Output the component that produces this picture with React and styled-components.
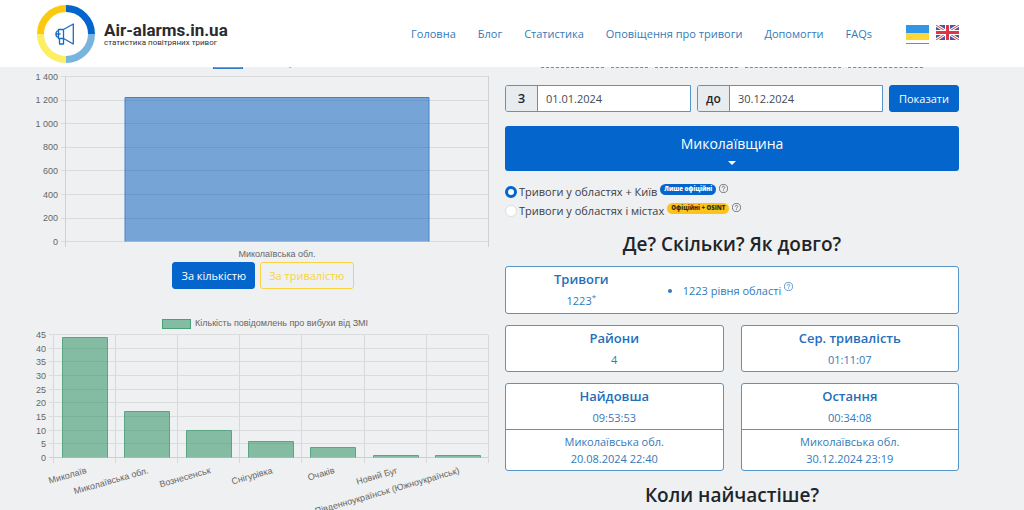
import React from "react";
import styled, { createGlobalStyle } from "styled-components";

const BLUE = "#0466cc";
const LINE = "#5795c8";
const TEXT_BLUE = "#3479b8";
const YELLOW = "#fbd341";

const Global = createGlobalStyle`
  *, *::before, *::after { box-sizing: border-box; }
  body {
    margin: 0;
    background: #eef0f2;
    color: #212529;
    font: 11px/18px "Open Sans", "Noto Sans", sans-serif;
  }
  button, input { font: inherit; }
  h1, h2, h3, p, ul { margin: 0; padding: 0; }
`;

const Page = styled.div`
  height: 100vh;
  overflow: hidden;
`;

const Header = styled.header`
  position: sticky;
  top: 0;
  z-index: 2;
  display: flex;
  align-items: center;
  justify-content: space-between;
  height: 67px;
  padding: 0 65px 0 36px;
  background: #fff;
`;

const Brand = styled.a`
  display: flex;
  align-items: center;
  gap: 8px;
  color: #2b2b2d;
  text-decoration: none;
`;

const BrandText = styled.span`
  display: flex;
  flex-direction: column;
`;

const BrandName = styled.span`
  font: 700 17px/18px Roboto, sans-serif;
`;

const BrandSub = styled.span`
  font: 8px/8px Roboto, sans-serif;
  color: #333;
`;

const Nav = styled.nav`
  display: flex;
  align-items: center;
  gap: 22px;
`;

const NavLink = styled.a`
  color: ${TEXT_BLUE};
  text-decoration: none;
  white-space: nowrap;
`;

const Flags = styled.div`
  display: flex;
  align-items: center;
  gap: 7px;
  margin-left: 12px;
`;

const Flag = styled.a`
  display: block;
  height: 20px;
  padding-top: 1px;
  border-bottom: 1px solid ${(p) => (p.$active ? LINE : "transparent")};
  svg { display: block; }
`;

const Main = styled.main`
  display: grid;
  grid-template-columns: 1fr 1fr;
  gap: 15px;
  margin-top: -17px;
  padding: 0 65px 0 36px;
`;

const Charts = styled.section`
  padding-top: 10px;
  min-width: 0;
`;

const Chart = styled.svg`
  display: block;
  width: 100%;
  font: 9px "Liberation Sans", Arial, sans-serif;
  fill: #666;
`;

const Modes = styled.div`
  display: flex;
  justify-content: center;
  gap: 5px;
  margin: 2px 0 27px;
`;

const Button = styled.button`
  height: 27px;
  padding: 0 ${(p) => (p.$compact ? "8px" : "9px")};
  border: 1px solid ${(p) => (p.$outline ? YELLOW : BLUE)};
  border-radius: 3px;
  background: ${(p) => (p.$outline ? "transparent" : BLUE)};
  color: ${(p) => (p.$outline ? YELLOW : "#fff")};
  font-weight: 500;
  line-height: 18px;
  white-space: nowrap;
`;

const Panel = styled.section`
  min-width: 0;
`;

const Presets = styled.div`
  display: flex;
  justify-content: center;
  gap: 7px;
  margin-bottom: 17px;
`;

const Preset = styled.a`
  height: 18px;
  border-bottom: 1px dashed ${LINE};
  color: ${TEXT_BLUE};
  font-size: 12px;
  line-height: 18px;
  text-decoration: none;
  white-space: nowrap;
`;

const DateForm = styled.form`
  display: flex;
  gap: 6px;
`;

const DateField = styled.label`
  display: flex;
  flex: 1;
  min-width: 0;
  height: 27px;
  border: 1px solid ${LINE};
  border-radius: 3px 0 0 3px;
  overflow: hidden;
`;

const DateLabel = styled.span`
  flex: 0 0 32px;
  border-right: 1px solid ${LINE};
  background: #e9ecef;
  font-size: 12px;
  font-weight: 600;
  line-height: 25px;
  text-align: center;
`;

const DateInput = styled.input`
  flex: 1;
  min-width: 0;
  padding: 0 8px;
  border: 0;
  background: #fff;
  color: #444b52;
`;

const RegionButton = styled.button`
  display: flex;
  flex-direction: column;
  align-items: center;
  width: 100%;
  height: 45px;
  margin: 14px 0 11px;
  padding: 8px 0 0;
  border: 0;
  border-radius: 3px;
  background: ${BLUE};
  color: #fff;
  font-size: 14px;
  line-height: 20px;
`;

const Caret = styled.span`
  margin-top: 7px;
  border: 4px solid transparent;
  border-top-color: #fff;
  border-bottom: 0;
`;

const Option = styled.label`
  display: flex;
  align-items: center;
  height: 19px;
  color: #3c4044;
`;

const Radio = styled.input`
  appearance: none;
  width: 12px;
  height: 12px;
  margin: 0 2px 0 0;
  border: 1px solid #dcdfe2;
  border-radius: 50%;
  background: #fff;
  &:checked { border: 3px solid ${BLUE}; }
`;

const Badge = styled.span`
  align-self: flex-start;
  height: 11px;
  margin: 2px 3px 0;
  padding: 0 4px;
  border-radius: 6px;
  background: ${(p) => (p.$warm ? "#fcc419" : BLUE)};
  color: ${(p) => (p.$warm ? "#3a300c" : "#fff")};
  font-size: 6px;
  font-weight: 800;
  line-height: 11px;
`;

const Help = styled.svg`
  align-self: flex-start;
  width: 9px;
  height: 9px;
  margin-top: 2px;
  fill: none;
  stroke: ${(p) => p.$color || "#555"};
  stroke-width: 1;
`;

const Heading = styled.h2`
  font-size: 19px;
  font-weight: 600;
  line-height: 24px;
  text-align: center;
  margin: ${(p) => (p.$lower ? "12px 0 0" : "12px 0 10px")};
`;

const CardGrid = styled.div`
  display: grid;
  grid-template-columns: 1fr 1fr;
  gap: 11px 17px;
`;

const Card = styled.article`
  display: ${(p) => (p.$wide ? "grid" : "block")};
  grid-column: ${(p) => (p.$wide ? "1 / -1" : "auto")};
  grid-template-columns: 1fr 2fr;
  align-items: center;
  border: 1px solid ${LINE};
  border-radius: 3px;
  background: #fff;
  color: ${TEXT_BLUE};
  text-align: center;
`;

const CardTop = styled.div`
  height: ${(p) => (p.$tall ? "46px" : "45px")};
  padding-top: 1px;
`;

const CardTitle = styled.h3`
  color: #236fbb;
  font-size: 13px;
  font-weight: 600;
  line-height: 22px;
  margin-bottom: 2px;
`;

const CardFoot = styled.div`
  height: 41px;
  border-top: 1px solid ${LINE};
  padding-top: 3px;
  line-height: 17px;
`;

const Levels = styled.ul`
  padding-left: 26px;
  text-align: left;
  svg { vertical-align: 4px; }
`;

const Star = styled.sup`
  font-size: 8px;
  line-height: 0;
`;

const Logo = () => (
  <svg width="60" height="60" viewBox="0 0 60 60" fill="none" aria-hidden="true">
    <g strokeWidth="7">
      <path d="M30 4.5A25.5 25.5 0 0 1 55.5 30" stroke="#0466cc" />
      <path d="M55.5 30A25.5 25.5 0 0 1 30 55.5" stroke="#79b4de" />
      <path d="M30 55.5A25.5 25.5 0 0 1 4.5 30" stroke="#fcef63" />
      <path d="M4.5 30A25.5 25.5 0 0 1 30 4.5" stroke="#fcc90f" />
    </g>
    <g stroke="#1b6bc0" strokeWidth="1.3" strokeLinejoin="round">
      <path d="M27.5 25.5L37.3 20V40L27.5 34.5Z" />
      <path d="M27.5 25.5H22.5V34.5H27.5" />
      <path d="M22.5 26.5C19 27.5 19 32.5 22.5 33.5" />
      <path d="M20 30H24.5M23.5 34.5V40H27.5V34.5" />
    </g>
  </svg>
);

const HelpIcon = ({ color }) => (
  <Help viewBox="0 0 12 12" $color={color} role="img" aria-label="Довідка">
    <circle cx="6" cy="6" r="5.4" />
    <path d="M4.3 4.8C4.3 2.5 7.7 2.5 7.7 4.7C7.7 6 6 5.9 6 7.4M6 8.4V9.5" />
  </Help>
);

const UkraineFlag = () => (
  <svg width="23" height="15" viewBox="0 0 23 15">
    <path fill="#2f96e8" d="M0 0h23v8H0z" />
    <path fill="#fdd835" d="M0 8h23v7H0z" />
  </svg>
);

const BritainFlag = () => (
  <svg width="23" height="15" viewBox="0 0 23 15">
    <path fill="#4a569f" d="M0 0h23v15H0z" />
    <path stroke="#fff" strokeWidth="3" d="M0 0L23 15M23 0L0 15" />
    <path stroke="#dc3c4c" d="M0 0L23 15M23 0L0 15" />
    <path stroke="#fff" strokeWidth="5" d="M11.5 0V15M0 7.5H23" />
    <path stroke="#dc3545" strokeWidth="3" d="M11.5 0V15M0 7.5H23" />
  </svg>
);

const navItems = ["Головна", "Блог", "Статистика", "Оповіщення про тривоги", "Допомогти", "FAQs"];
const presets = ["Позавчора", "Вчора", "Останні 7 днів", "Минулий місяць", "Увесь період"];

const AlarmsChart = () => {
  const ticks = ["1 400", "1 200", "1 000", "800", "600", "400", "200", "0"];
  const y = (i) => 16.5 + i * 23.6;
  return (
    <Chart viewBox="0 0 454 200" role="img" aria-label="Кількість тривог">
      <rect x="177.5" y="0.5" width="29" height="8" fill="#6f9ed3" stroke="#3479c4" />
      <text x="210" y="6">Кількість тривог</text>
      {ticks.map((t, i) => (
        <g key={t}>
          <path d={`M25 ${Math.floor(y(i)) + 0.5}H452`} stroke="#d8dadc" />
          <text x="22" y={y(i) + 3} textAnchor="end">{t}</text>
        </g>
      ))}
      <path d="M29.5 16V187M452.5 16V187" stroke="#cfd1d3" />
      <rect x="89" y="37.5" width="304" height="144" fill="#0058ba" fillOpacity="0.5" />
      <path d="M89 181.5V37.5H393V181.5" fill="none" stroke="#4583c6" />
      <text x="241" y="197" textAnchor="middle">Миколаївська обл.</text>
    </Chart>
  );
};

const blasts = [
  ["Миколаїв", 44],
  ["Миколаївська обл.", 17],
  ["Вознесенськ", 10],
  ["Снігурівка", 6],
  ["Очаків", 4],
  ["Новий Буг", 1],
  ["Південноукраїнськ (Южноукраїнськ)", 1],
];

const BlastsChart = () => {
  const step = 62.1;
  const base = 141.5;
  const scale = 2.73;
  const ticks = [0, 5, 10, 15, 20, 25, 30, 35, 40, 45];
  return (
    <Chart viewBox="0 0 454 210" role="img" aria-label="Повідомлення про вибухи">
      <rect x="126.5" y="3.5" width="28" height="9" fill="#83bca3" stroke="#4aa07a" />
      <text x="159" y="10">Кількість повідомлень про вибухи від ЗМІ</text>
      {ticks.map((t) => {
        const y = Math.floor(base - t * scale) + 0.5;
        return (
          <g key={t}>
            <path d={`M13 ${y}H452`} stroke={t ? "#dadcde" : "#cfcfd1"} />
            <text x="10" y={y + 3} textAnchor="end">{t}</text>
          </g>
        );
      })}
      {Array.from({ length: 8 }, (_, i) => (
        <path key={i} d={`M${Math.floor(17.5 + i * step) + 0.5} 19V147`} stroke="#d6d8da" />
      ))}
      {blasts.map(([name, n], i) => {
        const left = Math.round(26 + i * step) + 0.5;
        const top = Math.round(base - n * scale) + 0.5;
        return (
          <g key={name}>
            <rect x={left} y={top} width="45" height={base - top} fill="#198754" fillOpacity="0.5" />
            <path d={`M${left} ${base}V${top}h45V${base}`} fill="none" stroke="#5aa684" />
            <text
              textAnchor="end"
              transform={`translate(${Math.round(51 + i * step)} 157) rotate(-16)`}
            >
              {name}
            </text>
          </g>
        );
      })}
    </Chart>
  );
};

const StatCard = ({ title, value, place, time }) => (
  <Card>
    <CardTop>
      <CardTitle>{title}</CardTitle>
      <p>{value}</p>
    </CardTop>
    {place && (
      <CardFoot>
        <p>{place}</p>
        <p>{time}</p>
      </CardFoot>
    )}
  </Card>
);

export default function App() {
  return (
    <Page>
      <Global />
      <Header>
        <Brand href="#">
          <Logo />
          <BrandText>
            <BrandName>Air-alarms.in.ua</BrandName>
            <BrandSub>статистика повітряних тривог</BrandSub>
          </BrandText>
        </Brand>
        <Nav>
          {navItems.map((item) => (
            <NavLink key={item} href="#">{item}</NavLink>
          ))}
          <Flags>
            <Flag href="#" $active aria-label="Українська"><UkraineFlag /></Flag>
            <Flag href="#" aria-label="English"><BritainFlag /></Flag>
          </Flags>
        </Nav>
      </Header>
      <Main>
        <Charts>
          <AlarmsChart />
          <Modes>
            <Button type="button" $compact>За кількістю</Button>
            <Button type="button" $compact $outline>За тривалістю</Button>
          </Modes>
          <BlastsChart />
        </Charts>
        <Panel>
          <Presets>
            {presets.map((p) => (
              <Preset key={p} href="#">{p}</Preset>
            ))}
          </Presets>
          <DateForm>
            <DateField>
              <DateLabel>З</DateLabel>
              <DateInput type="text" defaultValue="01.01.2024" />
            </DateField>
            <DateField>
              <DateLabel>до</DateLabel>
              <DateInput type="text" defaultValue="30.12.2024" />
            </DateField>
            <Button type="button">Показати</Button>
          </DateForm>
          <RegionButton type="button">
            Миколаївщина
            <Caret />
          </RegionButton>
          <Option>
            <Radio type="radio" name="source" defaultChecked />
            Тривоги у областях + Київ
            <Badge>Лише офіційні</Badge>
            <HelpIcon />
          </Option>
          <Option>
            <Radio type="radio" name="source" />
            Тривоги у областях і містах
            <Badge $warm>Офіційні + OSINT</Badge>
            <HelpIcon />
          </Option>
          <Heading>Де? Скільки? Як довго?</Heading>
          <CardGrid>
            <Card $wide>
              <CardTop $tall>
                <CardTitle>Тривоги</CardTitle>
                <p>1223<Star>*</Star></p>
              </CardTop>
              <Levels>
                <li>1223 рівня області <HelpIcon color={TEXT_BLUE} /></li>
              </Levels>
            </Card>
            <StatCard title="Райони" value="4" />
            <StatCard title="Сер. тривалість" value="01:11:07" />
            <StatCard title="Найдовша" value="09:53:53" place="Миколаївська обл." time="20.08.2024 22:40" />
            <StatCard title="Остання" value="00:34:08" place="Миколаївська обл." time="30.12.2024 23:19" />
          </CardGrid>
          <Heading $lower>Коли найчастіше?</Heading>
        </Panel>
      </Main>
    </Page>
  );
}
